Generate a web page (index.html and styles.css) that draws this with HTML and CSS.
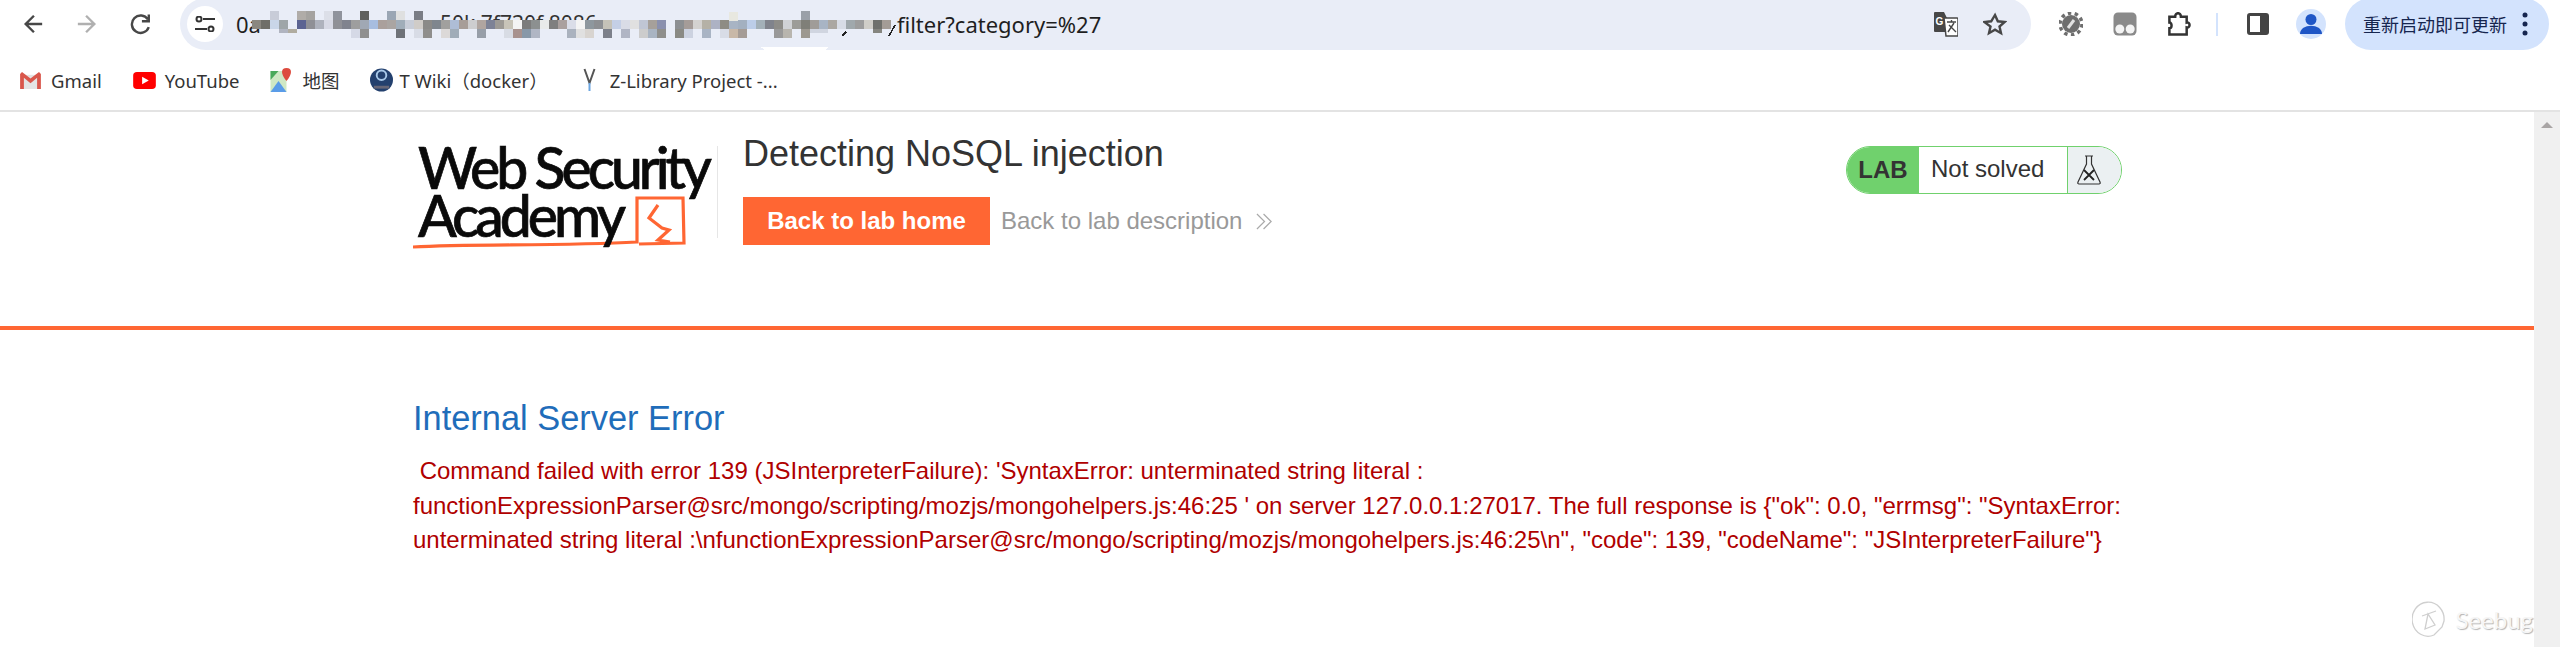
FILE: index.html
```html
<!DOCTYPE html>
<html lang="en">
<head>
<meta charset="utf-8">
<title>Detecting NoSQL injection</title>
<link rel="stylesheet" href="styles.css">
</head>
<body>
<div class="toolbar">
  <div class="nav">
    <svg class="ico" viewBox="0 0 24 24"><path d="M22 12H4M13 3l-9 9 9 9" fill="none" stroke="#474747" stroke-width="2.600"/></svg>
    <svg class="ico" viewBox="0 0 24 24"><path d="M2 12h18M11 3l9 9-9 9" fill="none" stroke="#b0b0b0" stroke-width="2.600"/></svg>
    <svg class="ico" viewBox="0 0 24 24"><path d="M20.500 15.500a9.500 9.500 0 1 1-1-8.500M20.500 1.500V9H13" fill="none" stroke="#474747" stroke-width="2.600"/></svg>
  </div>
  <div class="omnibox">
    <div class="site-chip"><svg viewBox="0 0 20 16" width="20" height="16"><path d="M8 3h12M0 13h12" stroke="#333" stroke-width="2"/><circle cx="4" cy="3" r="2.500" fill="none" stroke="#333" stroke-width="2"/><circle cx="16" cy="13" r="2.500" fill="none" stroke="#333" stroke-width="2"/></svg></div>
    <span class="url">0a</span>
    <svg class="mosaic" viewBox="252 -2 645 52">
      <svg x="440" y="10" width="190" height="10"><text x="0" y="21" class="url-under">50k 7f730f 8086</text></svg>
      <g>
        <rect x="252" y="20" fill="#8a8780"/><rect x="261" y="20" fill="#6f6e68"/><rect x="270" y="20" fill="#c9d6e8"/><rect x="279" y="20" fill="#9ea5a8"/><rect x="297" y="20" fill="#5b6392"/><rect x="306" y="20" fill="#8f9096"/><rect x="315" y="20" fill="#aeb2bd"/><rect x="324" y="20" fill="#d7d9e5"/><rect x="333" y="20" fill="#8f9096"/><rect x="342" y="20" fill="#80838e"/><rect x="351" y="20" fill="#9e9e9e"/><rect x="360" y="20" fill="#a0a8b4"/><rect x="369" y="20" fill="#a7bde0"/><rect x="378" y="20" fill="#aaa09c"/><rect x="387" y="20" fill="#aaa5a2"/><rect x="396" y="20" fill="#a0adb9"/><rect x="405" y="20" fill="#c8cdd8"/><rect x="414" y="20" fill="#d0ccc8"/><rect x="423" y="20" fill="#8b8a88"/><rect x="432" y="20" fill="#7f868e"/><rect x="441" y="20" fill="#a1a09e"/><rect x="450" y="20" fill="#aebdd6"/><rect x="459" y="20" fill="#a79d98"/><rect x="468" y="20" fill="#cdcdcf"/><rect x="477" y="20" fill="#b0a5a0"/><rect x="486" y="20" fill="#7d8296"/><rect x="495" y="20" fill="#9d9a95"/><rect x="504" y="20" fill="#c8c4b8"/><rect x="513" y="20" fill="#f4f4f4"/><rect x="522" y="20" fill="#7c7c7c"/><rect x="531" y="20" fill="#8c9090"/><rect x="540" y="20" fill="#e8eaea"/>
        <rect x="549" y="20" fill="#7f7f7f"/><rect x="558" y="20" fill="#aaa09e"/><rect x="567" y="20" fill="#dadde8"/><rect x="576" y="20" fill="#f4f4f4"/><rect x="585" y="20" fill="#8e979e"/><rect x="594" y="20" fill="#8d8f93"/><rect x="603" y="20" fill="#c5c2b8"/><rect x="612" y="20" fill="#c4cfe6"/><rect x="621" y="20" fill="#d9dce6"/><rect x="630" y="20" fill="#e0e0e0"/><rect x="639" y="20" fill="#c0c6d4"/><rect x="648" y="20" fill="#a6a09a"/><rect x="657" y="20" fill="#8a90ae"/><rect x="675" y="20" fill="#8c8f92"/><rect x="684" y="20" fill="#a59c98"/><rect x="693" y="20" fill="#d4d2d0"/><rect x="702" y="20" fill="#b5b1a6"/><rect x="711" y="20" fill="#adb2c4"/><rect x="720" y="20" fill="#8e8c84"/><rect x="729" y="20" fill="#a8b4c4"/><rect x="738" y="20" fill="#a3b0c0"/><rect x="747" y="20" fill="#bccde8"/><rect x="756" y="20" fill="#a3b0b8"/><rect x="765" y="20" fill="#80838c"/><rect x="774" y="20" fill="#8d8c88"/><rect x="783" y="20" fill="#d0d2d6"/><rect x="792" y="20" fill="#9c9c98"/><rect x="801" y="20" fill="#7f7f78"/><rect x="810" y="20" fill="#a09c98"/><rect x="819" y="20" fill="#a8b4c4"/><rect x="828" y="20" fill="#aba7a2"/><rect x="837" y="20" fill="#d8dce6"/><rect x="846" y="20" fill="#a0a8ac"/><rect x="855" y="20" fill="#9d9d9d"/><rect x="864" y="20" fill="#d0cec8"/><rect x="873" y="20" fill="#6f706c"/><rect x="882" y="20" fill="#a39c96"/>
        <rect x="270" y="11" fill="#c8ccd8"/><rect x="297" y="11" fill="#b0aca8"/><rect x="306" y="11" fill="#a5a3a0"/><rect x="324" y="11" fill="#dcdfe8"/><rect x="333" y="11" fill="#8f939c"/><rect x="360" y="11" fill="#5f605e"/><rect x="387" y="11" fill="#9aa6b4"/><rect x="396" y="11" fill="#dfe0e0"/><rect x="414" y="11" fill="#7a7d85"/><rect x="729" y="12" fill="#e8e8e0"/><rect x="801" y="11" fill="#9aa0a8"/>
        <rect x="279" y="29" class="short" fill="#b0b4c0"/><rect x="288" y="29" class="short" fill="#b0aca0"/><rect x="351" y="29" fill="#d5d9e6"/><rect x="360" y="29" fill="#8f8f8f"/><rect x="396" y="29" fill="#6e7278"/><rect x="414" y="29" fill="#d8dce6"/><rect x="423" y="29" fill="#8f8e8c"/><rect x="441" y="29" fill="#dcd9d8"/><rect x="450" y="29" fill="#a0acb8"/><rect x="477" y="29" fill="#979ea8"/><rect x="504" y="29" fill="#d8dce4"/><rect x="513" y="29" fill="#a8928e"/><rect x="522" y="29" fill="#8898a8"/><rect x="531" y="29" fill="#b0b6c4"/>
        <rect x="567" y="29" fill="#aab2be"/><rect x="576" y="29" fill="#e0e0e0"/><rect x="585" y="29" fill="#d8d4d0"/><rect x="603" y="29" fill="#7c808a"/><rect x="621" y="29" fill="#b0b5c4"/><rect x="639" y="29" fill="#ccc"/><rect x="648" y="29" fill="#a9b4c2"/><rect x="657" y="29" fill="#8f8f8c"/><rect x="675" y="29" fill="#8a8a84"/><rect x="684" y="29" fill="#ccd2e0"/><rect x="702" y="29" fill="#a9b4c4"/><rect x="720" y="29" fill="#d8dce6"/><rect x="729" y="29" fill="#c8b8a8"/><rect x="738" y="29" fill="#a59c96"/><rect x="774" y="29" fill="#999"/><rect x="783" y="29" fill="#b8b5ae"/><rect x="801" y="29" fill="#9c9890"/><rect x="810" y="29" class="short" fill="#d0d5e0"/><rect x="819" y="29" class="short" fill="#d0d5e0"/><rect x="873" y="29" class="short" fill="#85857f"/>
      </g>
      <path d="M846 32l-4 4M895 25l-6 11" stroke="#222" stroke-width="1.600" fill="none"/>
      <path d="M760 47h68l-3 3h-60z" fill="#fff"/>
    </svg>
    <span class="url">filter?category=%27</span>
    <svg class="ico-tr" viewBox="0 0 24 25"><path d="M0 1a1 1 0 0 1 1-1h9l3 6h-2v14H1a1 1 0 0 1-1-1z" fill="#474747"/><path d="M10 6h13a1 1 0 0 1 1 1v17H12z" fill="#fff" stroke="#474747" stroke-width="1.500"/><text x="1.500" y="13" class="tr-g">G</text><path d="M13 10h9M17.500 8v2M14 20l6-9M15 13l7 7" stroke="#474747" stroke-width="1.400" fill="none"/></svg>
    <svg class="ico-star" viewBox="0 0 24 24"><path d="M12 3l2.800 6.300 6.900.700-5.200 4.500 1.500 6.700-6-3.500-6 3.500 1.500-6.700L1.300 10l6.900-.700z" fill="none" stroke="#474747" stroke-width="2.400"/></svg>
  </div>
  <div class="actions">
    <svg class="ico-ext" viewBox="0 0 24 24"><circle cx="12" cy="12" r="11" fill="none" stroke="#6e6e6e" stroke-width="3.500" stroke-dasharray="3.500 3.400"/><circle cx="12" cy="12" r="9" fill="#6e6e6e"/><path d="M9 16l6-8" stroke="#e2e2e2" stroke-width="3"/></svg>
    <svg class="ico-ext" viewBox="0 0 24 24"><rect x=".5" y=".5" width="23" height="23" rx="4.500" fill="#8a8a8a"/><circle cx="6.800" cy="17" r="4.500" fill="#f4f4f4"/><circle cx="17.200" cy="17" r="4.500" fill="#f4f4f4"/></svg>
    <svg class="ico-ext ext-last" viewBox="0 0 24 25"><path d="M2 5h6c0-5 6-5 6 0h6v6c4-1 4 6 0 5v7.500H2V17c3 0 3-6 0-6z" fill="none" stroke="#333" stroke-width="2.600"/></svg>
    <span class="sep"></span>
    <svg class="ico-panel" viewBox="0 0 22 22"><rect x="1.500" y="1.500" width="19" height="19" rx="1.500" fill="#fff" stroke="#444" stroke-width="3"/><rect x="13" y="1" width="8" height="20" fill="#444"/></svg>
    <svg class="avatar" viewBox="0 0 30 30"><circle cx="15" cy="15" r="15" fill="#d3e3fd"/><circle cx="15" cy="10.500" r="5.500" fill="#1f56c6"/><path d="M4 25c0-11 22-11 22 0z" fill="#1f56c6"/></svg>
    <div class="update"><span>重新启动即可更新</span><svg viewBox="0 0 6 24" width="6" height="24"><circle cx="3" cy="3" r="2.500" fill="#16264f"/><circle cx="3" cy="12" r="2.500" fill="#16264f"/><circle cx="3" cy="21" r="2.500" fill="#16264f"/></svg></div>
  </div>
</div>
<div class="bookmarks">
  <a class="bm"><svg class="bm-ico" viewBox="0 0 22 18"><path d="M1 3h20v15H1z" fill="#e4e4e4"/><path d="M0 2l2-2 9 7 9-7 2 2v16h-4V6l-7 6-7-6v12H0z" fill="#d9574c"/></svg>Gmail</a>
  <a class="bm"><svg class="bm-ico" viewBox="0 0 24 18"><rect width="24" height="18" rx="4" fill="#f00"/><path d="M9.500 5l7 4-7 4z" fill="#fff"/></svg>YouTube</a>
  <a class="bm"><svg class="bm-ico bm-tall" viewBox="0 0 22 24"><path d="M0 3h16v21H0z" fill="#cfe8c4"/><path d="M0 24l8-11 8 11z" fill="#5a9ce8"/><path d="M0 3h8L0 12z" fill="#49a95a"/><path d="M16 0c-6 0-6 6 0 13 6-7 6-13 0-13z" fill="#dd4b3e"/></svg>地图</a>
  <a class="bm bm-twiki"><svg class="bm-ico bm-tall" viewBox="0 0 24 24"><circle cx="12" cy="12" r="12" fill="#23406e"/><circle cx="12" cy="7" r="5" fill="none" stroke="#a8c8e8" stroke-width="2"/><path d="M4 18h16v3H4z" fill="#667"/></svg>T Wiki（docker）</a>
  <a class="bm bm-zlib"><svg class="bm-ico bm-tall" viewBox="0 0 22 24"><path d="M6 1l5 14 5-14" fill="none" stroke="#555" stroke-width="2"/><path d="M11 15v8" stroke="#6aa5e0" stroke-width="2"/></svg>Z-Library Project -...</a>
</div>
<main class="page">
  <div class="scrollbar"><span class="scroll-up"></span></div>
  <header class="lab-header">
    <div class="head-row">
      <div class="logo">
        <span class="logo-line">Web Security</span>
        <span class="logo-line">Academy</span>
        <svg class="logo-mark" viewBox="0 0 300 106"><path d="M0 101c60-3 150-1 224-5V52h46l1 45-45 1" fill="none" stroke="#ff6633" stroke-width="3.200"/><path d="M245 59l-9 13 13 10 7 2-11 10 12 2" fill="none" stroke="#ff6633" stroke-width="3.200"/></svg>
      </div>
      <div class="lab-title">
        <h2 class="title">Detecting NoSQL injection</h2>
        <div class="title-links">
          <a class="btn">Back to lab home</a>
          <a class="desc-link">Back to lab description</a>
          <svg class="chev" viewBox="0 0 18 18"><path d="M1 1l8 8-8 8M8 1l8 8-8 8" fill="none" stroke="#aaa" stroke-width="1.300"/></svg>
        </div>
      </div>
      <div class="status">
        <span class="status-lab">LAB</span>
        <span class="status-text">Not solved</span>
        <span class="status-icon"><svg viewBox="0 0 24 30" width="24" height="30"><path d="M8 1h8M9.500 1v8L1 27c-.500 1.500 0 2 1 2h20c1 0 1.500-.500 1-2L14.500 9V1" fill="none" stroke="#333" stroke-width="1.200"/><path d="M7 15l10 10M17 15L7 25" stroke="#222" stroke-width="1.800"/></svg></span>
      </div>
    </div>
  </header>
  <section class="content">
    <h4 class="err-title">Internal Server Error</h4>
    <p class="err-text">&nbsp;Command failed with error 139 (JSInterpreterFailure): 'SyntaxError: unterminated string literal : functionExpressionParser@src/mongo/scripting/mozjs/mongohelpers.js:46:25 ' on server 127.0.0.1:27017. The full response is {"ok": 0.0, "errmsg": "SyntaxError: unterminated string literal :\nfunctionExpressionParser@src/mongo/scripting/mozjs/mongohelpers.js:46:25\n", "code": 139, "codeName": "JSInterpreterFailure"}</p>
  </section>
  <div class="watermark"><svg viewBox="0 0 34 37" width="34" height="37"><path d="M22 34A16 17 0 1 1 32 20l-2 6-8 8z" fill="none" stroke="#cfcfcf" stroke-width="1.300"/><path d="M10 15l14-5M16 13l-3 15 10-4z" fill="none" stroke="#cfcfcf" stroke-width="1.300"/></svg><span>Seebug</span></div>
</main>
</body>
</html>
```
FILE: styles.css
```css
* { box-sizing: border-box; }
html, body { margin: 0; padding: 0; height: 100%; overflow: hidden; background: #fff; }
body { font-family: "Liberation Sans", Arial, sans-serif; }

.toolbar { height: 48px; margin-bottom: 2px; display: flex; align-items: center; padding-left: 22px; }
.nav { display: flex; width: 158px; gap: 32px; align-items: center; }
.ico { width: 22px; height: 22px; flex: none; }
.omnibox { width: 1851px; height: 52px; margin: -2px 0; background: #e9edf7; border-radius: 26px; display: flex; align-items: center; }
.site-chip { width: 36px; height: 36px; border-radius: 50%; background: #fff; margin-left: 7px; margin-right: 13px; display: flex; align-items: center; justify-content: center; flex: none; }
.url { font-family: "Noto Sans", sans-serif; font-size: 22px; color: #1f1f1f; white-space: nowrap; }
.mosaic { width: 645px; height: 52px; margin-left: -9px; flex: none; shape-rendering: crispEdges; }
.mosaic rect { width: 9px; height: 9px; }
.mosaic rect.short { height: 4px; }
.url-under { font-family: "Noto Sans", sans-serif; font-size: 21px; fill: #333; }
.ico-tr { width: 24px; height: 25px; flex: none; margin-left: auto; margin-right: 25px; }
.tr-g { font-size: 10px; font-weight: 700; fill: #fff; }
.ico-star { width: 24px; height: 24px; flex: none; margin-right: 24px; }
.actions { display: flex; align-items: center; flex: 1; padding-left: 28px; }
.ico-ext { width: 24px; height: 24px; flex: none; margin-right: 30px; }
.ext-last { margin-right: 25px; }
.sep { width: 2px; height: 23px; background: #d3e3fd; margin-right: 29px; flex: none; }
.ico-panel { width: 22px; height: 22px; flex: none; margin-right: 27px; }
.avatar { width: 30px; height: 30px; flex: none; margin-right: 19px; }
.update { width: 204px; height: 52px; margin: -2px 0; background: #d3e3fd; border-radius: 26px; display: flex; align-items: center; padding-left: 18px; gap: 15px; font-family: "Noto Sans CJK SC", sans-serif; font-size: 18px; color: #16264f; white-space: nowrap; flex: none; }

.bookmarks { height: 62px; display: flex; align-items: center; padding: 0 0 0 19px; gap: 31px; border-bottom: 2px solid #e3e3e3; }
.bm { display: flex; align-items: center; gap: 9px; font-family: "Noto Sans", "Noto Sans CJK SC", sans-serif; font-size: 18.500px; color: #333; white-space: nowrap; }
.bm-twiki { gap: 7px; margin-left: -1px; }
.bm-zlib { margin-left: -1px; }
.bm-ico { width: 23px; height: 17px; flex: none; }
.bm-tall { height: 24px; }

.page { position: relative; height: 535px; }
.scrollbar { position: absolute; right: 0; top: 0; bottom: 0; width: 26px; background: #f0f0f0; }
.scroll-up { position: absolute; left: 7px; top: 10px; border: 6px solid transparent; border-top: 0; border-bottom: 6px solid #a9a5a5; }
.lab-header { height: 218px; border-bottom: 4px solid #ff6633; }
.head-row { display: flex; margin-left: 413px; width: 1709px; padding-top: 34px; }
.logo { position: relative; width: 305px; height: 92px; border-right: 1px solid #e6e6e6; flex: none; }
.logo-line { display: block; margin-left: 5px; font-family: Lato, sans-serif; font-weight: 500; font-size: 57px; line-height: 48px; letter-spacing: -4px; -webkit-text-stroke: .7px #0a0a0a; color: #0a0a0a; white-space: nowrap; position: relative; top: -3px; z-index: 1; }
.logo-mark { position: absolute; left: 0; top: 0; width: 300px; height: 106px; }
.lab-title { margin-left: 25px; }
.title { margin: -17px 0 0; font-weight: 400; font-size: 36px; line-height: 50px; color: #333; white-space: nowrap; }
.title-links { display: flex; align-items: center; margin-top: 18px; height: 48px; }
.btn { width: 247px; height: 48px; line-height: 48px; background: #ff6633; color: #fff; font-weight: 700; font-size: 24px; text-align: center; }
.desc-link { margin-left: 11px; font-size: 24px; color: #999; white-space: nowrap; }
.chev { width: 17px; height: 17px; margin-left: 14px; }
.status { display: flex; height: 48px; margin-left: auto; border: 1px solid #70d16d; border-radius: 24px; overflow: hidden; width: 276px; flex: none; }
.status-lab { width: 72px; background: #70d16d; text-align: center; line-height: 46px; font-weight: 700; font-size: 24px; color: #333; flex: none; }
.status-text { width: 148px; padding-left: 12px; line-height: 44px; font-size: 24px; color: #333; flex: none; }
.status-icon { flex: 1; background: #ebf0f2; border-left: 1px solid #70d16d; padding-left: 9px; display: flex; align-items: center; }
.content { padding-top: 67px; margin-left: 413px; width: 1709px; }
.err-title { margin: 0; font-weight: 400; font-size: 34.400px; line-height: 42px; color: #1f6dba; }
.err-text { margin: 15px 0 0; font-size: 24px; line-height: 34.500px; color: #b00000; }
.watermark { position: absolute; right: 27px; bottom: 9px; display: flex; align-items: center; gap: 9px; color: #f6f6f6; text-shadow: 1px 1px 1px #b5b5b5; font-family: Lato, sans-serif; font-size: 24px; }
```
